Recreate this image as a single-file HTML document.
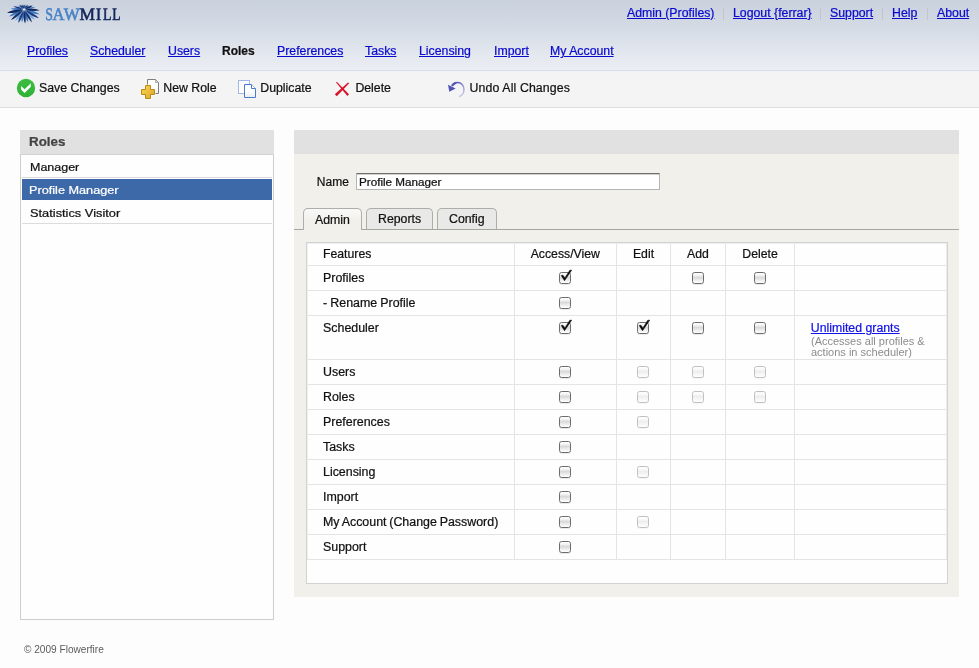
<!DOCTYPE html>
<html>
<head>
<meta charset="utf-8">
<title>Sawmill - Roles</title>
<style>
*{box-sizing:border-box;margin:0;padding:0}
html,body{width:979px;height:668px;overflow:hidden}
body{background:#fdfdfd;font-family:"Liberation Sans",sans-serif;font-size:12.3px;color:#111;position:relative;-webkit-text-stroke:0.22px}
a{color:#0a0acd;text-decoration:underline}
#wrap{position:absolute;left:0;top:0;width:979px;height:668px;will-change:transform;transform:translateZ(0)}
#hdr{position:absolute;left:0;top:0;width:979px;height:70px;background:linear-gradient(#c9d1dd 0px,#d3dae4 25px,#e4e8ef 55px,#ebeef3 70px)}
#toplinks a{position:absolute;top:5px;height:16px;line-height:16px;font-size:12.3px;white-space:nowrap}
#toplinks i{position:absolute;top:8px;width:1px;height:12px;background:#c3c5c8}
#nav a,#nav b{position:absolute;top:43px;height:16px;line-height:16px;font-size:12.3px;white-space:nowrap}
#nav b{color:#111;font-size:12px}
#tb{position:absolute;left:0;top:70px;width:979px;height:38px;background:#f4f4f4;border-top:1px solid #d6dde8;border-bottom:1px solid #dddfe3}
#tb .t{position:absolute;top:9px;height:16px;line-height:16px;font-size:12.3px;white-space:nowrap;color:#111}
#tb svg{position:absolute}
#left{position:absolute;left:20px;top:130px;width:254px;height:490px;border:1px solid #cdcdcd;background:#fefefe}
#lefth{position:absolute;left:20px;top:130px;width:254px;height:24px;background:#e1e1e1}
.sx{position:absolute;white-space:nowrap;transform-origin:0 50%}
.li{position:absolute;left:22px;width:250px;height:21px}
.sep{position:absolute;left:22px;width:250px;height:1px;background:#dcdcdc}
#right{position:absolute;left:294px;top:130px;width:665px;height:467px;background:#f1f0ea}
#right .h{position:absolute;left:0;top:0;width:665px;height:24px;background:#e1e1e1}
#inp{position:absolute;left:356px;top:173px;width:304px;height:17px;border:1px solid #b5b5b5;border-top:1px solid #6f6f6f;background:#fff;box-shadow:inset 0 1px 0 #cfcfcf}
#tabline{position:absolute;left:294px;top:229px;width:665px;height:1px;background:#a6a6a2}
.tab{position:absolute;top:208px;height:21px;border:1px solid #adada9;border-bottom:none;border-radius:5px 5px 0 0;background:#e9e9e7}
.tab.on{background:linear-gradient(#f9f9f7,#f1f0ea 60%);height:22px}
.tt{position:absolute;font-size:12.3px;line-height:14px;height:14px;white-space:nowrap}
#tbl{position:absolute;left:306px;top:242px;width:642px;height:342px;border:1px solid #d2d2d2;background:#fefefe}
.hl{position:absolute;left:307px;width:640px;height:1px;background:#e4e4e4}
.vl{position:absolute;top:243px;width:1px;height:316px;background:#e4e4e4}
.c{position:absolute;font-size:12.25px;line-height:14px;height:14px;white-space:nowrap;color:#111}
.cb{position:absolute;width:12px;height:12px;border:1px solid #6c6c6c;border-radius:2.6px;background:linear-gradient(#ffffff 0%,#f4f4f4 22%,#d4d4d4 50%,#e2e2e2 56%,#efefef 75%,#ffffff 100%);box-shadow:0 1px 0 rgba(0,0,0,0.08)}
.cb.dis{opacity:0.42}
.ck{position:absolute;width:16px;height:16px;overflow:visible}
#foot{position:absolute;left:24px;top:644.2px;font-size:10.1px;color:#5c5c5c;-webkit-text-stroke:0;line-height:12px;white-space:nowrap}
</style>
</head>
<body>
<div id="wrap">
<div id="hdr">
<svg id="logo" width="130" height="30" viewBox="0 0 130 30" style="position:absolute;left:0;top:0"><g id="burst"><path d="M24.87 9.73Q32.79 14.53 39.69 14.18Q34.12 10.09 24.87 9.73Z" fill="#3f7cc6"/><path d="M24.67 10.06Q29.03 17.43 34.90 20.08Q32.13 14.27 24.67 10.06Z" fill="#6ea5de"/><path d="M24.35 10.26Q24.62 17.80 28.23 22.27Q28.53 16.53 24.35 10.26Z" fill="#3570bb"/><path d="M23.96 10.29Q20.74 16.97 21.85 22.54Q24.76 17.67 23.96 10.29Z" fill="#3f7cc6"/><path d="M23.61 10.13Q17.04 15.15 15.19 21.12Q20.48 17.79 23.61 10.13Z" fill="#6ea5de"/><path d="M23.37 9.84Q14.02 11.57 8.95 16.51Q16.00 15.84 23.37 9.84Z" fill="#3570bb"/><path d="M23.30 9.46Q16.04 7.02 10.50 8.82Q15.83 11.16 23.30 9.46Z" fill="#3f7cc6"/><path d="M23.41 9.09Q20.76 5.70 17.20 5.43Q19.16 8.41 23.41 9.09Z" fill="#6ea5de"/><path d="M23.68 8.82Q23.48 5.91 21.14 4.71Q21.17 7.34 23.68 8.82Z" fill="#3570bb"/><path d="M24.04 8.70Q25.18 6.45 23.75 4.57Q22.60 6.63 24.04 8.70Z" fill="#3f7cc6"/><path d="M24.42 8.77Q26.58 7.13 26.21 4.67Q24.16 6.07 24.42 8.77Z" fill="#6ea5de"/><path d="M24.72 9.00Q28.28 8.05 29.52 5.16Q26.43 5.74 24.72 9.00Z" fill="#3570bb"/><path d="M24.89 9.35Q31.17 10.04 35.29 7.33Q30.46 6.36 24.89 9.35Z" fill="#3f7cc6"/><path d="M24.90 9.54Q33.33 12.22 39.67 10.28Q33.56 7.72 24.90 9.54Z" fill="#14275e"/><path d="M24.79 9.91Q31.84 16.87 39.03 18.32Q34.29 12.71 24.79 9.91Z" fill="#1d3d80"/><path d="M24.52 10.18Q27.01 18.41 32.08 22.40Q30.77 16.08 24.52 10.18Z" fill="#17306c"/><path d="M24.16 10.30Q22.58 18.10 25.10 23.58Q26.81 17.80 24.16 10.30Z" fill="#14275e"/><path d="M23.78 10.23Q18.55 16.75 18.18 23.03Q22.54 18.49 23.78 10.23Z" fill="#1d3d80"/><path d="M23.48 10.00Q14.66 14.01 10.84 20.11Q17.63 17.72 23.48 10.00Z" fill="#17306c"/><path d="M23.31 9.65Q13.38 9.12 7.01 12.82Q14.30 13.86 23.31 9.65Z" fill="#14275e"/><path d="M23.33 9.27Q18.20 5.79 13.38 6.28Q17.13 9.35 23.33 9.27Z" fill="#1d3d80"/><path d="M23.53 8.94Q22.13 5.50 19.09 4.60Q20.06 7.62 23.53 8.94Z" fill="#17306c"/><path d="M23.85 8.74Q24.36 5.93 22.40 4.24Q21.80 6.76 23.85 8.74Z" fill="#14275e"/><path d="M24.24 8.71Q25.96 6.56 25.01 4.22Q23.33 6.11 24.24 8.71Z" fill="#1d3d80"/><path d="M24.59 8.87Q27.54 7.35 27.95 4.48Q25.28 5.62 24.59 8.87Z" fill="#17306c"/><path d="M24.83 9.16Q29.91 8.68 32.60 5.57Q28.49 5.60 24.83 9.16Z" fill="#14275e"/><ellipse cx="24.1" cy="9.5" rx="1.3" ry="0.8" fill="#e6edf6"/></g><g font-family="Liberation Serif, serif" font-size="17.6" text-rendering="geometricPrecision"><text transform="translate(45.28 19.7) scale(0.784 1)" fill="#4a84c6" stroke="#4a84c6" stroke-width="0.6">S</text><text transform="translate(52.42 19.7) scale(0.942 1)" fill="#4a84c6" stroke="#4a84c6" stroke-width="0.6">A</text><text transform="translate(63.70 19.7) scale(0.963 1)" fill="#4a84c6" stroke="#4a84c6" stroke-width="0.6">W</text><text transform="translate(79.62 19.7) scale(0.989 1)" fill="#13265a" stroke="#13265a" stroke-width="0.6">M</text><text transform="translate(96.10 19.7) scale(0.870 1)" fill="#13265a" stroke="#13265a" stroke-width="0.6">I</text><text transform="translate(103.01 19.7) scale(0.794 1)" fill="#13265a" stroke="#13265a" stroke-width="0.6">L</text><text transform="translate(112.32 19.7) scale(0.773 1)" fill="#13265a" stroke="#13265a" stroke-width="0.6">L</text></g></svg>
<div id="toplinks">
<a style="left:627px">Admin (Profiles)</a><i style="left:723px"></i>
<a style="left:733px">Logout {ferrar}</a><i style="left:820px"></i>
<a style="left:830px">Support</a><i style="left:882px"></i>
<a style="left:892px">Help</a><i style="left:927px"></i>
<a style="left:937px">About</a>
</div>
<div id="nav">
<a style="left:27px">Profiles</a>
<a style="left:90px">Scheduler</a>
<a style="left:168px">Users</a>
<b style="left:222px">Roles</b>
<a style="left:277px">Preferences</a>
<a style="left:365px">Tasks</a>
<a style="left:419px">Licensing</a>
<a style="left:494px">Import</a>
<a style="left:550px">My Account</a>
</div>
</div>
<div id="tb">
<svg width="979" height="36" viewBox="0 0 979 36" style="left:0;top:0">
<defs>
<linearGradient id="gg" x1="0" y1="0" x2="0" y2="1"><stop offset="0" stop-color="#3dbd42"/><stop offset="1" stop-color="#2fb236"/></linearGradient>
<linearGradient id="gp" x1="0" y1="0" x2="1" y2="1"><stop offset="0" stop-color="#fbd75a"/><stop offset="1" stop-color="#dea521"/></linearGradient>
<linearGradient id="gd" x1="0" y1="0" x2="0" y2="1"><stop offset="0" stop-color="#ffffff"/><stop offset="0.5" stop-color="#ffffff"/><stop offset="1" stop-color="#ececec"/></linearGradient>
<linearGradient id="gu" gradientUnits="userSpaceOnUse" x1="452" y1="13" x2="462" y2="26"><stop offset="0" stop-color="#4747ad"/><stop offset="0.45" stop-color="#8d8dcf"/><stop offset="1" stop-color="#d0d0ea"/></linearGradient>
</defs>
<circle cx="26" cy="17" r="9.15" fill="url(#gg)"/>
<path d="M21 15.099999999999994L24.6 18.25L30.8 12.25L30.8 15.849999999999994L24.6 22.099999999999994L21.2 18.700000000000003Z" fill="#fff"/>
<path d="M147.5 8.5H155.5L158.5 11.5V22.5H147.5Z" fill="url(#gd)" stroke="#7f7f7f" stroke-width="1"/>
<path d="M155.5 8.5V11.5H158.5Z" fill="#d8d8d8" stroke="#8a8a8a" stroke-width="0.6"/>
<path d="M145 14H151V18H155V24H151V28H145V24H141V18H145Z" fill="#fff" stroke="#fff" stroke-width="1.2" stroke-opacity="0.8" stroke-linejoin="round"/>
<path d="M145.5 14.5H150.5V18.5H154.5V23.5H150.5V27.5H145.5V23.5H141.5V18.5H145.5Z" fill="url(#gp)" stroke="#b98a12" stroke-width="1" stroke-linejoin="round"/>
<rect x="238.5" y="9.5" width="11" height="13" fill="#fdfdfd" stroke="#9fb9e2" stroke-width="1"/>
<path d="M244.5 13.5H251.5L255.5 17.5V26.5H244.5Z" fill="url(#gd)" stroke="#4c7dcc" stroke-width="1"/>
<path d="M251.5 13.5V17.5H255.5" fill="#fff" stroke="#4c7dcc" stroke-width="1"/>
<path d="M335.9 11.200000000000003L337 10.900000000000006L349 23.299999999999997L347.4 25Z" fill="#d8142b"/>
<path d="M348 11.599999999999994L349.2 12.200000000000003L336.8 25.200000000000003L334.8 23.200000000000003Z" fill="#d8142b"/>
<path d="M459.3 25.7C462.6 24.3 464 21.5 464 18.5C464 14.5 461.2 11.6 457.6 11.6C455.5 11.6 453.6 12.6 452.4 14.3" fill="none" stroke="url(#gu)" stroke-width="1.5"/>
<path id="stem" d="M456.2 11.8C454.4 12.2 453 13.2 451.9 14.9" fill="none" stroke="#5454b6" stroke-width="2.2"/>
<path d="M448 13.799999999999997L455.6 17.400000000000006L449.3 20.700000000000003Z" fill="#5151b6"/>
</svg>
<span class="t" style="left:39px">Save Changes</span>
<span class="t" style="left:163.3px">New Role</span>
<span class="t" style="left:260.3px">Duplicate</span>
<span class="t" style="left:355.4px">Delete</span>
<span class="t" style="left:469.6px;letter-spacing:0.12px">Undo All Changes</span>
</div>
<div id="left"></div><div id="lefth"></div><div style="position:absolute;left:20px;top:154px;width:254px;height:1px;background:#d3d3d3"></div>
<span class="sx" style="left:28.8px;top:134.6px;font-size:12px;line-height:14px;height:14px;color:#444;font-weight:bold;transform:scaleX(1.115)">Roles</span>
<div class="sep" style="top:177px"></div>
<div class="li" style="top:179px;background:#3e69a9"></div>
<div class="sep" style="top:223px"></div>
<span class="sx" style="left:29.6px;top:160.2px;font-size:11px;line-height:14px;height:14px;color:#111;font-weight:normal;transform:scaleX(1.135)">Manager</span>
<span class="sx" style="left:29.4px;top:183.2px;font-size:11px;line-height:14px;height:14px;color:#fff;font-weight:normal;transform:scaleX(1.153)">Profile Manager</span>
<span class="sx" style="left:29.8px;top:206.2px;font-size:11px;line-height:14px;height:14px;color:#111;font-weight:normal;transform:scaleX(1.165)">Statistics Visitor</span>
<div id="right"><div class="h"></div></div>
<span class="tt" style="left:316.8px;top:174.6px;font-size:12px">Name</span>
<div id="inp"></div>
<span class="sx" style="left:358.8px;top:175.7px;font-size:10px;line-height:14px;height:14px;color:#111;font-weight:normal;transform:scaleX(1.168)">Profile Manager</span>
<div id="tabline"></div>
<div class="tab on" style="left:303px;width:59px"></div>
<div class="tab" style="left:366px;width:67px"></div>
<div class="tab" style="left:437px;width:60px"></div>
<span class="tt" style="left:315px;top:212.8px">Admin</span>
<span class="tt" style="left:378px;top:211.8px">Reports</span>
<span class="tt" style="left:449px;top:211.8px">Config</span>
<div id="tbl"></div>
<div class="hl" style="top:265px"></div>
<div class="hl" style="top:290px"></div>
<div class="hl" style="top:315px"></div>
<div class="hl" style="top:359px"></div>
<div class="hl" style="top:384px"></div>
<div class="hl" style="top:409px"></div>
<div class="hl" style="top:434px"></div>
<div class="hl" style="top:459px"></div>
<div class="hl" style="top:484px"></div>
<div class="hl" style="top:509px"></div>
<div class="hl" style="top:534px"></div>
<div class="hl" style="top:559px"></div>
<div class="vl" style="left:514px"></div>
<div class="vl" style="left:616px"></div>
<div class="vl" style="left:670px"></div>
<div class="vl" style="left:725px"></div>
<div class="vl" style="left:794px"></div>
<div class="vl" style="left:946px;background:#ececec"></div><div class="vl" style="left:307px;background:#efefef"></div><div class="hl" style="top:243px;background:#efefef"></div>
<span class="c" style="left:323.0px;top:246.7px">Features</span>
<span class="c" style="left:505.29999999999995px;width:120px;text-align:center;top:246.7px">Access/View</span>
<span class="c" style="left:583.5px;width:120px;text-align:center;top:246.7px">Edit</span>
<span class="c" style="left:638px;width:120px;text-align:center;top:246.7px">Add</span>
<span class="c" style="left:700px;width:120px;text-align:center;top:246.7px">Delete</span>
<span class="c" style="font-size:12.42px;word-spacing:0;left:323.0px;top:270.7px">Profiles</span>
<div class="cb" style="left:559px;top:272px"></div>
<svg class="ck" style="left:559px;top:270px" viewBox="0 0 16 16"><path d="M2.2 5.4L3.9 5.2L5.9 7.9L10.8 0.2L12.7 0.2L5.5 10.7Z" fill="#0a0a0a" stroke="#0a0a0a" stroke-width="0.55" stroke-linejoin="round"/></svg>
<div class="cb" style="left:692px;top:272px"></div>
<div class="cb" style="left:754px;top:272px"></div>
<span class="c" style="font-size:12.42px;word-spacing:-0.3px;left:323.0px;top:295.7px">- Rename Profile</span>
<div class="cb" style="left:559px;top:297px"></div>
<span class="c" style="font-size:12.42px;word-spacing:0;left:323.0px;top:320.7px">Scheduler</span>
<div class="cb" style="left:559px;top:322px"></div>
<svg class="ck" style="left:559px;top:320px" viewBox="0 0 16 16"><path d="M2.2 5.4L3.9 5.2L5.9 7.9L10.8 0.2L12.7 0.2L5.5 10.7Z" fill="#0a0a0a" stroke="#0a0a0a" stroke-width="0.55" stroke-linejoin="round"/></svg>
<div class="cb" style="left:637px;top:322px"></div>
<svg class="ck" style="left:637px;top:320px" viewBox="0 0 16 16"><path d="M2.2 5.4L3.9 5.2L5.9 7.9L10.8 0.2L12.7 0.2L5.5 10.7Z" fill="#0a0a0a" stroke="#0a0a0a" stroke-width="0.55" stroke-linejoin="round"/></svg>
<div class="cb" style="left:692px;top:322px"></div>
<div class="cb" style="left:754px;top:322px"></div>
<span class="c" style="font-size:12.42px;word-spacing:0;left:323.0px;top:364.7px">Users</span>
<div class="cb" style="left:559px;top:366px"></div>
<div class="cb dis" style="left:637px;top:366px"></div>
<div class="cb dis" style="left:692px;top:366px"></div>
<div class="cb dis" style="left:754px;top:366px"></div>
<span class="c" style="font-size:12.42px;word-spacing:0;left:323.0px;top:389.7px">Roles</span>
<div class="cb" style="left:559px;top:391px"></div>
<div class="cb dis" style="left:637px;top:391px"></div>
<div class="cb dis" style="left:692px;top:391px"></div>
<div class="cb dis" style="left:754px;top:391px"></div>
<span class="c" style="font-size:12.42px;word-spacing:0;left:323.0px;top:414.7px">Preferences</span>
<div class="cb" style="left:559px;top:416px"></div>
<div class="cb dis" style="left:637px;top:416px"></div>
<span class="c" style="font-size:12.42px;word-spacing:0;left:323.0px;top:439.7px">Tasks</span>
<div class="cb" style="left:559px;top:441px"></div>
<span class="c" style="font-size:12.42px;word-spacing:0;left:323.0px;top:464.7px">Licensing</span>
<div class="cb" style="left:559px;top:466px"></div>
<div class="cb dis" style="left:637px;top:466px"></div>
<span class="c" style="font-size:12.42px;word-spacing:0;left:323.0px;top:489.7px">Import</span>
<div class="cb" style="left:559px;top:491px"></div>
<span class="c" style="font-size:12.42px;word-spacing:-0.65px;left:323.0px;top:514.7px">My Account (Change Password)</span>
<div class="cb" style="left:559px;top:516px"></div>
<div class="cb dis" style="left:637px;top:516px"></div>
<span class="c" style="font-size:12.42px;word-spacing:0;left:323.0px;top:539.7px">Support</span>
<div class="cb" style="left:559px;top:541px"></div>
<a class="c" style="left:810.8px;top:321.0px;font-size:12.3px;color:#1212e6">Unlimited grants</a>
<span class="c" style="left:811px;top:336.2px;font-size:11px;color:#8c8c8c;line-height:11px;height:auto;-webkit-text-stroke:0">(Accesses all profiles &amp;<br>actions in scheduler)</span>
<div id="foot">© 2009 Flowerfire</div>
</div>
</body>
</html>
